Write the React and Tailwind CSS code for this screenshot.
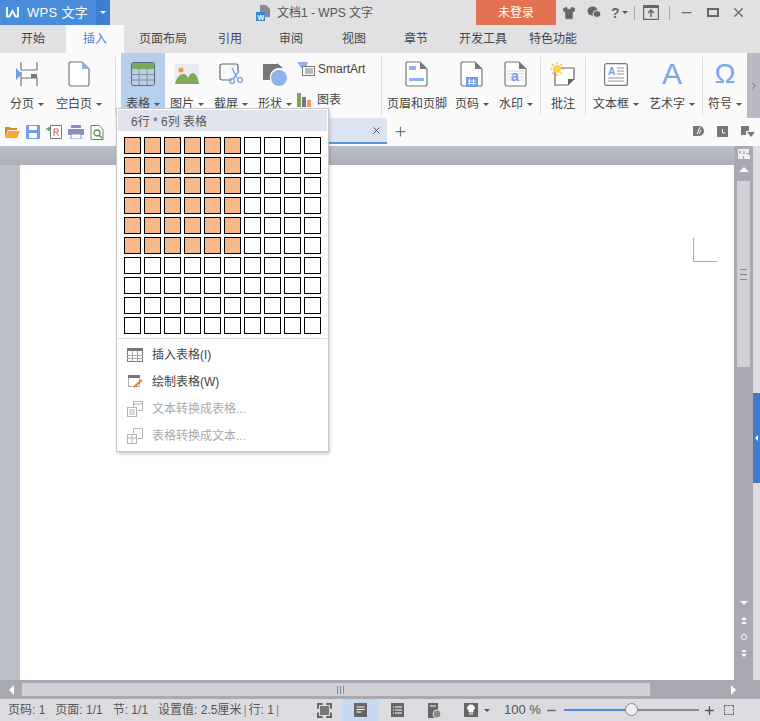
import React from 'react';
import { ChevronRight, Minus, Plus, Shirt, X } from 'lucide-react';

const font = { fontFamily: '"Liberation Sans", "Noto Sans CJK SC", sans-serif' };

const tabs = [
    { name: '开始', w: 'w-[66px]' },
    { name: '插入', w: 'w-[58px]', active: true },
    { name: '页面布局', w: 'w-[78px]' },
    { name: '引用', w: 'w-[56px]' },
    { name: '审阅', w: 'w-[66px]' },
    { name: '视图', w: 'w-[60px]' },
    { name: '章节', w: 'w-[64px]' },
    { name: '开发工具', w: 'w-[70px]' },
    { name: '特色功能', w: 'w-[70px]' },
];

const Caret = ({ className = '' }) => (
    <span className={`inline-block w-0 h-0 border-x-[3px] border-x-transparent border-t-[3px] border-t-[#555] ml-1 align-middle ${className}`} />
);

const Doc = ({ children }) => (
    <svg width="24" height="26" viewBox="0 0 24 26" fill="none">
        <path d="M2 1h13l7 7v15a2 2 0 0 1-2 2H3a2 2 0 0 1-2-2V2z" fill="#fff" stroke="#777" strokeWidth="1.2" />
        <path d="M15 1l7 7h-7z" fill="#777" />
        {children}
    </svg>
);

const icons = {
    page: (
        <svg width="24" height="26" viewBox="0 0 24 26" fill="none">
            <path d="M6 1v8h16M22 1v8M6 25v-8h16v8M6 17V11" stroke="#777" strokeWidth="1.2" />
            <path d="M16 13h6v4h-6z" fill="#777" />
            <path d="M1 7l6 6-6 6z" fill="#6f9fe6" />
        </svg>
    ),
    blank: (
        <svg width="22" height="26" viewBox="0 0 22 26" fill="none">
            <path d="M2 1h12l7 7v15a2 2 0 0 1-2 2H3a2 2 0 0 1-2-2V2z" fill="#fff" stroke="#777" strokeWidth="1.2" />
            <path d="M14 1l7 7h-7z" fill="#8fb3ec" />
        </svg>
    ),
    table: (
        <svg width="24" height="24" viewBox="0 0 24 24">
            <rect x="0.5" y="0.5" width="23" height="23" rx="2" fill="#b7cde9" stroke="#666" />
            <rect x="1" y="1" width="22" height="6" fill="#78a95f" />
            <path d="M1 12.5h22M1 18h22M8 7v16M16 7v16" stroke="#8a8f98" />
        </svg>
    ),
    picture: (
        <svg width="24" height="20" viewBox="0 0 24 20">
            <rect width="24" height="20" fill="#e9edf2" />
            <circle cx="6" cy="6" r="2.5" fill="#ef9a45" />
            <path d="M0 20c2-7 5-10 8-10s4 2 5 4c1-3 3-5 5-5 3 0 5 5 6 11z" fill="#84a95a" />
        </svg>
    ),
    shot: (
        <svg width="24" height="22" viewBox="0 0 24 22" fill="none">
            <path d="M13 17H3a2 2 0 0 1-2-2V3a2 2 0 0 1 2-2h14a2 2 0 0 1 2 2v5" stroke="#666" strokeWidth="1.2" />
            <path d="M13 5l5 10M20 8l-6 8" stroke="#6f9fe6" strokeWidth="1.3" />
            <circle cx="13" cy="18" r="2.4" stroke="#6f9fe6" strokeWidth="1.3" />
            <circle cx="21" cy="17" r="2.4" stroke="#6f9fe6" strokeWidth="1.3" />
        </svg>
    ),
    shape: (
        <svg width="24" height="23" viewBox="0 0 24 23">
            <path d="M0 1h14v4a10 10 0 0 0-7 12H0z" fill="#777" />
            <path d="M14 0l6 5h-6z" fill="#777" />
            <circle cx="16" cy="15" r="8" fill="#8fb3ec" />
        </svg>
    ),
    header: (
        <Doc>
            <rect x="4" y="5" width="7" height="4" fill="#8fb3ec" />
            <rect x="4" y="17" width="15" height="3" fill="#8fb3ec" />
        </Doc>
    ),
    pageno: (
        <Doc>
            <rect x="6" y="16" width="12" height="10" fill="#6f9fe6" />
            <path d="M9.5 18v6M13.5 18v6M8 20h8M8 22.5h8" stroke="#fff" strokeWidth="0.9" />
        </Doc>
    ),
    mark: (
        <Doc>
            <path d="M3 10h17M3 13h17M3 16h17M3 19h17" stroke="#d3d3d6" />
            <text x="7" y="20" fontSize="14" fontWeight="700" fill="#6f9fe6" fontFamily="Liberation Sans">a</text>
        </Doc>
    ),
    comment: (
        <svg width="26" height="24" viewBox="0 0 26 24" fill="none">
            <path d="M5 6h19v11l-6 6H5z" fill="#fff" stroke="#666" strokeWidth="1.2" />
            <path d="M18 23v-6h6z" fill="#666" />
            <circle cx="7" cy="7" r="4" fill="#ffd24d" />
            <path d="M7 0v2M7 12v2M0 7h2M12 7h2M2 2l1.500 1.500M12 2l-1.500 1.500M2 12l1.500-1.500M12 12l-1.500-1.500" stroke="#f2b01e" strokeWidth="1.2" />
        </svg>
    ),
    textbox: (
        <svg width="24" height="23" viewBox="0 0 24 23" fill="none">
            <rect x="0.6" y="0.6" width="22.800" height="21.800" rx="2" fill="#fff" stroke="#777" strokeWidth="1.2" />
            <text x="4" y="12" fontSize="10" fontWeight="700" fill="#6f9fe6" fontFamily="Liberation Sans">A</text>
            <path d="M13 5h7M13 8h7M13 11h7M4 15h16M4 18h16" stroke="#999" />
        </svg>
    ),
};

const RibbonItem = ({ icon, label, caret, className = '', highlight }) => (
    <div className={`flex flex-col items-center shrink-0 h-[65px] pt-[7px] ${highlight ? 'bg-[#b5d0ee]' : ''} ${className}`}>
        <div className="h-[28px] flex items-center justify-center">{icon}</div>
        <div className="mt-[8px] text-[12px] leading-[16px] text-[#444] whitespace-nowrap">
            {label}
            {caret && <Caret />}
        </div>
    </div>
);

const Sep = ({ className = '' }) => <div className={`w-px h-[58px] mt-[4px] bg-[#dcdcdc] shrink-0 ${className}`} />;

const Cell = ({ on }) => (
    <div className={`w-[17px] h-[17px] border border-black ${on ? 'bg-[#f7b98a]' : 'bg-white'}`} />
);

const MenuRow = ({ icon, label, disabled }) => (
    <div className={`h-[27px] flex items-center pl-[9px] text-[12px] ${disabled ? 'text-[#aaa]' : 'text-[#444]'}`}>
        <div className="w-[16px] h-[16px] flex items-center justify-center">{icon}</div>
        <span className="ml-[9px]">{label}</span>
    </div>
);

const TableMenu = () => (
    <div className="absolute left-[116px] top-[108px] w-[213px] h-[344px] bg-white border border-[#c8c8c8] shadow-[1px_2px_3px_rgba(0,0,0,0.2)] p-px z-10">
        <div className="h-[21px] bg-[#e1e4ee] pl-[13px] text-[12px] leading-[24px] text-[#555]">6行 * 6列 表格</div>
        <div className="grid grid-cols-[repeat(10,17px)] gap-[3px] pl-[6px] pt-[6px]">
            {Array.from({ length: 100 }).map((_, i) => (
                <Cell key={i} on={i % 10 < 6 && i < 60} />
            ))}
        </div>
        <div className="h-px bg-[#dcdcdc] mt-[4px] mb-[2px]" />
        <MenuRow
            label="插入表格(I)"
            icon={
                <svg width="16" height="14" viewBox="0 0 16 14">
                    <rect x="0.500" y="0.500" width="15" height="13" fill="#fff" stroke="#777" />
                    <rect width="16" height="3" fill="#777" />
                    <path d="M0 7.500h16M0 10.500h16M5.500 3v11M10.500 3v11" stroke="#aaa" />
                </svg>
            }
        />
        <MenuRow
            label="绘制表格(W)"
            icon={
                <svg width="15" height="13" viewBox="0 0 15 13">
                    <rect x="0.500" y="0.500" width="11" height="11" fill="#fff" stroke="#888" strokeDasharray="2 1" />
                    <rect width="12" height="3" fill="#777" />
                    <path d="M6 12l8-7" stroke="#f0793a" strokeWidth="2" />
                </svg>
            }
        />
        <MenuRow
            disabled
            label="文本转换成表格..."
            icon={
                <svg width="16" height="16" viewBox="0 0 16 16" fill="none" stroke="#b5b5b5">
                    <path d="M6.500.500h9v9h-5M6.500.500v5M6.500 3h9" />
                    <rect x="0.500" y="6.500" width="9" height="9" fill="#fff" />
                    <path d="M2 9h6M2 11h6M2 13h6" />
                </svg>
            }
        />
        <MenuRow
            disabled
            label="表格转换成文本..."
            icon={
                <svg width="16" height="16" viewBox="0 0 16 16" fill="none" stroke="#b5b5b5">
                    <path d="M6.500 5V.500h9v10h-5" />
                    <rect x="0.500" y="6.500" width="9" height="9" fill="#fff" />
                    <path d="M0 10h10M5 6.500v9" />
                </svg>
            }
        />
    </div>
);

const TitleBar = () => (
    <div className="h-[25px] flex items-stretch bg-[#e1e1e4] relative">
        <div className="w-[96px] bg-[#4a8ddc] flex items-center pl-[6px] text-white">
            <svg width="13" height="11" viewBox="0 0 13 11" fill="none" stroke="#fff" strokeWidth="1.800">
                <path d="M1 0v9.500h2.500L6.500 4l3 5.500H12V0" />
            </svg>
            <span className="ml-[8px] text-[13px] tracking-[0.3px]">WPS 文字</span>
        </div>
        <div className="w-[14px] bg-[#3f7fd0] flex items-center justify-center">
            <span className="w-0 h-0 border-x-[3px] border-x-transparent border-t-[3px] border-t-white" />
        </div>
        <div className="w-[146px] shrink-0" />
        <div className="flex items-center text-[12px] text-[#555] w-[134px]">
            <svg width="15" height="16" viewBox="0 0 15 16" className="mr-[6px]">
                <path d="M4 0h6l4 4v8H4z" fill="#8a8a8e" />
                <rect y="7" width="9" height="9" fill="#3f86d8" />
                <text x="1.500" y="14.500" fontSize="7" fontWeight="700" fill="#fff" fontFamily="Liberation Sans">W</text>
            </svg>
            文档1 - WPS 文字
        </div>
        <div className="w-[86px] shrink-0" />
        <div className="w-[80px] bg-[#e27152] text-white text-[12px] flex items-center justify-center">未登录</div>
        <div className="flex items-center flex-1 text-[#666] pl-[6px]">
            <Shirt size={14} fill="#666" strokeWidth={1} />
            <svg width="14" height="13" viewBox="0 0 14 13" fill="#666" className="ml-[11px]">
                <ellipse cx="5.500" cy="5" rx="5" ry="4.500" />
                <ellipse cx="10" cy="8" rx="4" ry="3.500" stroke="#e1e1e4" />
            </svg>
            <span className="ml-[10px] text-[14px] font-bold leading-none">?</span>
            <Caret className="ml-[2px]" />
            <div className="w-px h-[14px] bg-[#aaa] ml-[6px]" />
            <svg width="16" height="15" viewBox="0 0 16 15" fill="none" stroke="#666" strokeWidth="1.200" className="ml-[8px]">
                <rect x="0.600" y="0.600" width="14.800" height="13.800" />
                <path d="M1 2h14" strokeWidth="2" />
                <path d="M8 12V5M5 8l3-3 3 3" strokeWidth="1.500" />
            </svg>
            <div className="w-px h-[14px] bg-[#aaa] ml-[10px]" />
            <Minus size={15} strokeWidth={2} className="ml-[9px]" />
            <div className="w-[12px] h-[9px] border-2 border-[#666] ml-[13px]" />
            <X size={15} strokeWidth={2.200} className="ml-[12px]" />
        </div>
    </div>
);

const TabBar = () => (
    <div className="h-[28px] flex items-stretch bg-[#e1e1e4] text-[12px] text-[#444]">
        {tabs.map((t) => (
            <div
                key={t.name}
                className={`${t.w} flex items-center justify-center shrink-0 ${t.active ? 'bg-[#fafafa] text-[#3f86d8]' : ''}`}
            >
                {t.name}
            </div>
        ))}
    </div>
);

const SmallItems = () => (
    <div className="w-[82px] shrink-0 pt-[3px] text-[12px] text-[#444]">
        <div className="h-[26px] flex items-center">
            <svg width="18" height="14" viewBox="0 0 18 14" fill="none">
                <path d="M0 0h11l-2 6H4z" fill="#8fb3ec" />
                <rect x="5.500" y="4.500" width="12" height="9" fill="#fff" stroke="#777" />
                <path d="M8 7h8M8 9h8M8 11h8" stroke="#777" />
            </svg>
            <span className="ml-[3px]">SmartArt</span>
        </div>
        <div className="h-[26px] mt-[5px] flex items-center">
            <svg width="15" height="14" viewBox="0 0 15 14">
                <rect y="0" width="4" height="14" fill="#78a95f" />
                <rect x="5" y="4" width="4" height="10" fill="#777" />
                <rect x="10" y="7" width="4" height="7" fill="#ef9a6a" />
            </svg>
            <span className="ml-[5px]">图表</span>
        </div>
    </div>
);

const Ribbon = () => (
    <div className="h-[65px] bg-[#fafafa] flex relative">
        <RibbonItem icon={icons.page} label="分页" caret className="w-[44px] ml-[5px]" />
        <RibbonItem icon={icons.blank} label="空白页" caret className="w-[56px] ml-[2px]" />
        <Sep className="ml-[8px]" />
        <RibbonItem icon={icons.table} label="表格" caret highlight className="w-[44px] ml-[5px]" />
        <RibbonItem icon={icons.picture} label="图片" caret className="w-[44px]" />
        <RibbonItem icon={icons.shot} label="截屏" caret className="w-[44px]" />
        <RibbonItem icon={icons.shape} label="形状" caret className="w-[44px]" />
        <SmallItems />
        <Sep className="ml-[2px]" />
        <RibbonItem icon={icons.header} label="页眉和页脚" className="w-[60px] ml-[5px]" />
        <RibbonItem icon={icons.pageno} label="页码" caret className="w-[44px] ml-[3px]" />
        <RibbonItem icon={icons.mark} label="水印" caret className="w-[44px]" />
        <Sep className="ml-[2px]" />
        <RibbonItem icon={icons.comment} label="批注" className="w-[44px]" />
        <Sep />
        <RibbonItem icon={icons.textbox} label="文本框" caret className="w-[56px] ml-[2px]" />
        <RibbonItem
            icon={<span className="text-[30px] leading-none text-[#7ba7ee]">A</span>}
            label="艺术字"
            caret
            className="w-[56px]"
        />
        <Sep className="ml-[2px]" />
        <RibbonItem
            icon={<span className="text-[28px] leading-none text-[#7ba7ee]">Ω</span>}
            label="符号"
            caret
            className="w-[44px] overflow-hidden"
        />
        <div className="absolute right-0 top-0 h-[65px] w-[13px] bg-[#b8b9c2] flex items-center justify-center">
            <ChevronRight size={10} color="#666" />
        </div>
    </div>
);

const QuickBar = () => (
    <div className="h-[28px] bg-[#fafafa] flex items-center relative">
        <div className="flex items-center gap-[6px] pl-[5px]">
            <svg width="15" height="12" viewBox="0 0 15 12">
                <path d="M0 1h5l1 1h6v2H3L0 11z" fill="#d98a1f" />
                <path d="M3 5h12l-3 7H0z" fill="#f5a633" />
            </svg>
            <svg width="14" height="14" viewBox="0 0 14 14">
                <rect width="14" height="14" rx="1" fill="#6f9fe6" />
                <rect x="3" y="1" width="8" height="4" fill="#fff" />
                <rect x="3" y="8" width="8" height="5" fill="#fff" />
            </svg>
            <svg width="16" height="14" viewBox="0 0 16 14" fill="none">
                <rect x="4.500" y="0.500" width="11" height="13" fill="#fff" stroke="#777" />
                <path d="M0 4h4M3 2v4" stroke="#5a9e50" strokeWidth="1.500" />
                <path d="M8 11V4h4v3H8M10 7l3 4" stroke="#d65a5a" />
            </svg>
            <svg width="16" height="14" viewBox="0 0 16 14">
                <rect x="3" width="10" height="3" fill="#8a8fc0" />
                <rect y="4" width="16" height="6" rx="1" fill="#8a8fc0" />
                <rect x="3" y="9" width="10" height="5" fill="#fff" stroke="#8a8fc0" />
            </svg>
            <svg width="14" height="15" viewBox="0 0 14 15" fill="none">
                <path d="M1 .500h8l4 4v10H1z" fill="#fff" stroke="#777" />
                <circle cx="7" cy="8" r="3" stroke="#4f9a4a" strokeWidth="1.300" />
                <path d="M9 10l3 3" stroke="#4f9a4a" strokeWidth="1.500" />
            </svg>
        </div>
        <div className="absolute left-[329px] top-0 w-[58px] h-[26px] bg-[#dbe5f2] border-b-2 border-[#5b93d8] flex items-center justify-end pr-[5px]">
            <X size={11} color="#444" />
        </div>
        <Plus size={15} color="#777" strokeWidth={2} className="absolute left-[393px] top-[6px]" />
        <div className="absolute right-[5px] top-[7px] flex items-center gap-[13px]">
            <svg width="11" height="12" viewBox="0 0 11 12">
                <path d="M0 1h6a5 5 0 0 1 0 10H0z" fill="#777" />
                <path d="M4 9l3-7M6 9l2-4" stroke="#fff" />
            </svg>
            <svg width="11" height="11" viewBox="0 0 11 11">
                <rect width="11" height="11" fill="#777" />
                <path d="M5.500 3v4h3" stroke="#fff" fill="none" />
            </svg>
            <svg width="14" height="11" viewBox="0 0 14 11">
                <path d="M0 0h8v5H5v4H0z" fill="#777" />
                <path d="M6 6h8l-4 5z" fill="#777" />
            </svg>
        </div>
    </div>
);

const VScroll = () => (
    <div className="w-[19px] bg-[#a9a9b3] flex flex-col items-center shrink-0">
        <svg width="12" height="11" viewBox="0 0 12 11" className="mt-[3px]">
            <path d="M0 0h11v4H8v3H5v3H0z" fill="#eee" />
            <path d="M2 2v3M6 2v3" stroke="#888" />
            <path d="M6 10V7l2-2h2l2 2v3z" fill="#eee" />
        </svg>
        <span className="mt-[7px] w-0 h-0 border-x-[5px] border-x-transparent border-b-[5px] border-b-white" />
        <div className="mt-[9px] w-[13px] h-[186px] bg-[#d0d1d6] flex flex-col items-center justify-center gap-[2px]">
            <div className="w-[7px] h-px bg-[#8a8a92]" />
            <div className="w-[7px] h-px bg-[#8a8a92] my-[2px]" />
            <div className="w-[7px] h-px bg-[#8a8a92]" />
        </div>
        <div className="flex-1" />
        <span className="w-0 h-0 border-x-[4px] border-x-transparent border-t-[4px] border-t-white" />
        <div className="mt-[12px] flex flex-col items-center gap-px">
            <span className="w-0 h-0 border-x-[3px] border-x-transparent border-b-[3px] border-b-white" />
            <span className="w-0 h-0 border-x-[3px] border-x-transparent border-b-[3px] border-b-white" />
        </div>
        <div className="mt-[10px] w-[6px] h-[6px] rounded-full border border-white" />
        <div className="mt-[10px] mb-[23px] flex flex-col items-center gap-px">
            <span className="w-0 h-0 border-x-[3px] border-x-transparent border-t-[3px] border-t-white" />
            <span className="w-0 h-0 border-x-[3px] border-x-transparent border-t-[3px] border-t-white" />
        </div>
    </div>
);

const DocArea = () => (
    <div className="h-[534px] flex bg-[#bdbfc9] relative">
        <div className="flex-1 flex flex-col min-w-0">
            <div className="h-[19px] bg-gradient-to-b from-[#bcbec9] to-[#adaeb6]" />
            <div className="flex-1 pl-[20px] bg-[#bdbfc9]">
                <div className="h-full bg-white relative">
                    <div className="absolute left-[673px] top-[73px] w-[24px] h-[24px] border-l border-b border-[#a8a8a8]" />
                </div>
            </div>
        </div>
        <VScroll />
        <div className="w-[7px] bg-[#dfdfe3] shrink-0 flex flex-col">
            <div className="h-[247px]" />
            <div className="h-[90px] bg-[#3f7bcb] flex items-center justify-center">
                <span className="w-0 h-0 border-y-[3px] border-y-transparent border-r-[3px] border-r-white" />
            </div>
        </div>
    </div>
);

const HScroll = () => (
    <div className="h-[19px] bg-[#a9a9b3] flex items-center pr-[7px] relative">
        <div className="w-[22px] flex items-center justify-center">
            <span className="w-0 h-0 border-y-[5px] border-y-transparent border-r-[5px] border-r-white" />
        </div>
        <div className="w-[628px] h-[13px] bg-[#d0d1d6] flex items-center justify-center gap-[2px] pl-[8px]">
            <div className="w-px h-[8px] bg-[#8a8a92]" />
            <div className="w-px h-[8px] bg-[#8a8a92]" />
            <div className="w-px h-[8px] bg-[#8a8a92]" />
        </div>
        <div className="flex-1" />
        <span className="w-0 h-0 border-y-[5px] border-y-transparent border-l-[5px] border-l-white mr-[17px]" />
    </div>
);

const StatusBar = () => (
    <div className="h-[22px] bg-[#dcdce0] flex items-center text-[12px] text-[#555] whitespace-nowrap">
        <span className="ml-[8px]">页码: 1</span>
        <span className="ml-[10px]">页面: 1/1</span>
        <span className="ml-[10px]">节: 1/1</span>
        <span className="ml-[10px]">设置值: 2.5厘米</span>
        <span className="ml-[2px] text-[#888]">|</span>
        <span className="ml-[2px]">行: 1</span>
        <span className="ml-[2px] text-[#888]">|</span>
        <div className="ml-[38px] w-[15px] h-[15px] border-2 border-dashed border-[#666] p-px shrink-0">
            <div className="w-full h-full bg-[#777]" />
        </div>
        <div className="ml-[10px] w-[37px] h-[22px] bg-[#c5d9f1] flex items-center justify-center shrink-0">
            <svg width="13" height="14" viewBox="0 0 13 14">
                <rect width="13" height="14" fill="#666" />
                <path d="M2.500 4h8M2.500 6.500h8M2.500 9h5" stroke="#fff" />
            </svg>
        </div>
        <svg width="13" height="14" viewBox="0 0 13 14" className="ml-[12px] shrink-0">
            <rect width="13" height="14" fill="#666" />
            <path d="M4 4h7M4 7h7M4 10h7M2 4h1M2 7h1M2 10h1" stroke="#fff" />
        </svg>
        <svg width="14" height="15" viewBox="0 0 14 15" className="ml-[24px] shrink-0">
            <path d="M0 0h10v15H0z" fill="#666" />
            <path d="M2 3h6" stroke="#fff" />
            <circle cx="9" cy="11" r="4" fill="#888" stroke="#dcdce0" />
        </svg>
        <svg width="14" height="14" viewBox="0 0 14 14" className="ml-[22px] shrink-0">
            <rect width="14" height="14" fill="#666" />
            <path d="M7 2a3 3 0 0 1 2 5.500V9H5V7.500A3 3 0 0 1 7 2zM5 11h4" fill="#fff" stroke="#fff" />
        </svg>
        <Caret className="ml-[6px]" />
        <span className="ml-[14px] text-[13px]">100 %</span>
        <Minus size={13} strokeWidth={2.500} color="#666" className="ml-[4px] shrink-0" />
        <div className="ml-[6px] w-[135px] h-[2px] bg-[#8a8a8a] relative shrink-0">
            <div className="w-[61px] h-full bg-[#4a8ddc]" />
            <div className="absolute left-[61px] top-[-6px] w-[13px] h-[13px] rounded-full bg-[#f0f0f0] border border-[#888]" />
        </div>
        <Plus size={13} strokeWidth={2.500} color="#555" className="ml-[4px] shrink-0" />
        <div className="ml-[8px] w-[10px] h-[10px] border border-dashed border-[#777] shrink-0" />
    </div>
);

export default function App() {
    return (
        <div className="w-[760px] h-[721px] relative overflow-hidden bg-[#dcdce0]" style={font}>
            <TitleBar />
            <TabBar />
            <Ribbon />
            <QuickBar />
            <DocArea />
            <HScroll />
            <StatusBar />
            <TableMenu />
        </div>
    );
}
